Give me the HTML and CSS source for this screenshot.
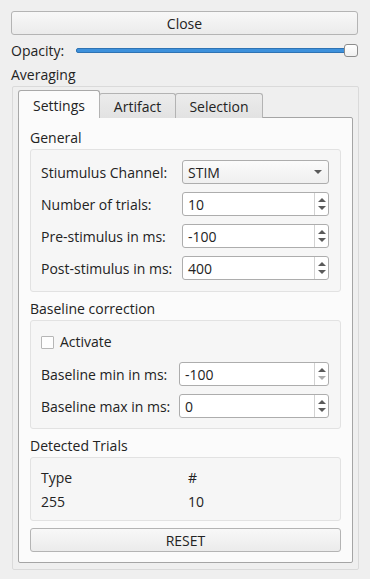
FILE: index.html
```html
<!DOCTYPE html>
<html lang="en">
<head>
  <meta charset="UTF-8">
  <meta name="viewport" content="width=device-width, initial-scale=1.0">
  <title>Averaging</title>
  <link rel="stylesheet" href="styles.css">
</head>
<body>
  <div class="window">
    <div class="push-btn close-btn">Close</div>

    <div class="opacity-row">
      <span class="opacity-label">Opacity:</span>
      <div class="slider">
        <div class="slider-groove"></div>
        <div class="slider-handle"></div>
      </div>
    </div>

    <div class="section-title">Averaging</div>
    <div class="averaging-box">
      <div class="tab-bar">
        <div class="tab tab-active tab-settings">Settings</div>
        <div class="tab tab-artifact">Artifact</div>
        <div class="tab tab-selection">Selection</div>
      </div>

      <div class="tab-pane">
        <!-- General -->
        <div class="group-title">General</div>
        <div class="group-box">
          <div class="form-grid general-grid">
            <span class="form-label">Stiumulus Channel:</span>
            <div class="combo">
              <span>STIM</span>
              <span class="combo-arrow"></span>
            </div>

            <span class="form-label">Number of trials:</span>
            <div class="spin">
              <span class="spin-value">10</span>
              <div class="spin-buttons"><span class="arrow-up"></span><span class="arrow-down"></span></div>
            </div>

            <span class="form-label">Pre-stimulus in ms:</span>
            <div class="spin">
              <span class="spin-value">-100</span>
              <div class="spin-buttons"><span class="arrow-up"></span><span class="arrow-down"></span></div>
            </div>

            <span class="form-label">Post-stimulus in ms:</span>
            <div class="spin">
              <span class="spin-value">400</span>
              <div class="spin-buttons"><span class="arrow-up"></span><span class="arrow-down"></span></div>
            </div>
          </div>
        </div>

        <!-- Baseline correction -->
        <div class="group-title">Baseline correction</div>
        <div class="group-box baseline-box">
          <label class="check-row">
            <span class="checkbox"></span>
            <span>Activate</span>
          </label>
          <div class="form-grid baseline-grid">
            <span class="form-label">Baseline min in ms:</span>
            <div class="spin">
              <span class="spin-value">-100</span>
              <div class="spin-buttons"><span class="arrow-up"></span><span class="arrow-down arrow-disabled"></span></div>
            </div>

            <span class="form-label">Baseline max in ms:</span>
            <div class="spin">
              <span class="spin-value">0</span>
              <div class="spin-buttons"><span class="arrow-up"></span><span class="arrow-down"></span></div>
            </div>
          </div>
        </div>

        <!-- Detected trials -->
        <div class="group-title">Detected Trials</div>
        <div class="group-box trials-box">
          <div class="trials-grid">
            <span>Type</span><span>#</span>
            <span>255</span><span>10</span>
          </div>
        </div>

        <div class="push-btn reset-btn">RESET</div>
      </div>
    </div>
  </div>
</body>
</html>
```

FILE: styles.css
```css
body {
  margin: 0;
  background-color: #efefef;
  font-family: "Open Sans", "DejaVu Sans", sans-serif;
  font-size: 14px;
  color: #232323;
}
.window {
  padding: 11px 12px 0 11px;
}

/* buttons */
.push-btn {
  box-sizing: border-box;
  height: 24px;
  padding-top: 1px;
  line-height: 21px;
  text-align: center;
  border: 1px solid #b4b4b4;
  border-radius: 3px;
  background: linear-gradient(#f8f8f8, #ebebeb);
}
.close-btn {
  width: 347px;
}

/* opacity slider */
.opacity-row {
  display: flex;
  align-items: center;
  height: 30px;
}
.opacity-label {
  width: 65px;
}
.slider {
  position: relative;
  flex: 1;
  height: 14px;
}
.slider-groove {
  position: absolute;
  left: 0;
  right: 6px;
  top: 5px;
  height: 5px;
  box-sizing: border-box;
  border: 1px solid #2f73b3;
  border-radius: 2px;
  background-color: #3d91dc;
}
.slider-handle {
  position: absolute;
  right: 0;
  top: 1px;
  width: 14px;
  height: 13px;
  box-sizing: border-box;
  border: 1px solid #8c8c8c;
  border-radius: 3px;
  background: linear-gradient(#ffffff, #f0f0f0);
}

.section-title {
  height: 20px;
  line-height: 20px;
  margin-bottom: 1px;
}

/* averaging group with tabs */
.averaging-box {
  box-sizing: border-box;
  width: 347px;
  margin-left: 1px;
  padding: 3px 5px 6px 5px;
  border: 1px solid #dadada;
  border-radius: 2px;
  background-color: #efefef;
}
.tab-bar {
  display: flex;
  align-items: flex-end;
  margin-bottom: -1px;
  position: relative;
  z-index: 1;
}
.tab {
  box-sizing: border-box;
  height: 25px;
  padding-top: 1px;
  line-height: 23px;
  text-align: center;
  border: 1px solid #b3b3b3;
  border-bottom: none;
  border-radius: 3px 3px 0 0;
  background: linear-gradient(#ececec, #e2e2e2);
}
.tab-active {
  height: 28px;
  padding-top: 2px;
  line-height: 26px;
  background: #fbfbfb;
  border-color: #a8a8a8;
}
.tab-settings { width: 82px; }
.tab-artifact { width: 77px; margin-left: -1px; }
.tab-selection { width: 88px; margin-left: -1px; }

.tab-pane {
  box-sizing: border-box;
  height: 446px;
  padding: 10px 11px 10px 11px;
  border: 1px solid #a5a5a5;
  border-radius: 0 2px 2px 2px;
  background-color: #fbfbfb;
}

/* group boxes */
.group-title {
  height: 20px;
  line-height: 20px;
  margin-bottom: 1px;
}
.group-box {
  box-sizing: border-box;
  padding: 10px 10px 11px 10px;
  border: 1px solid #e2e2e2;
  border-radius: 3px;
  background-color: #f6f6f6;
  margin-bottom: 7px;
}
.form-grid {
  display: grid;
  row-gap: 8px;
  align-items: center;
}
.general-grid {
  grid-template-columns: 141px 147px;
}
.baseline-grid {
  grid-template-columns: 138px 150px;
}
.baseline-box {
  padding-bottom: 10px;
}
.check-row {
  display: flex;
  align-items: center;
  gap: 6px;
  height: 21px;
  margin-bottom: 10px;
}
.checkbox {
  box-sizing: border-box;
  width: 13px;
  height: 13px;
  margin-top: 1px;
  border: 1px solid #b6b6b6;
  border-radius: 1px;
  background-color: #fdfdfd;
}

/* combo and spin boxes */
.combo, .spin {
  box-sizing: border-box;
  height: 24px;
  display: flex;
  align-items: center;
  border: 1px solid #adadad;
  border-radius: 3px;
}
.combo {
  justify-content: space-between;
  padding: 0 6px 0 5px;
  background: linear-gradient(#fbfbfb, #efefef);
}
.combo-arrow {
  width: 0;
  height: 0;
  border-left: 4px solid transparent;
  border-right: 4px solid transparent;
  border-top: 4px solid #5a5a5a;
}
.spin {
  background-color: #ffffff;
}
.spin-value {
  flex: 1;
  padding-left: 5px;
}
.spin-buttons {
  box-sizing: border-box;
  width: 14px;
  height: 100%;
  display: flex;
  flex-direction: column;
  justify-content: center;
  align-items: center;
  gap: 4px;
  border-left: 1px solid #d2d2d2;
}
.arrow-up, .arrow-down {
  width: 0;
  height: 0;
  border-left: 4px solid transparent;
  border-right: 4px solid transparent;
}
.arrow-up { border-bottom: 4px solid #5a5a5a; }
.arrow-down { border-top: 4px solid #5a5a5a; }
.arrow-disabled { border-top-color: #ababab; }

/* detected trials */
.trials-box {
  padding: 10px 10px 8px 10px;
}
.trials-grid {
  display: grid;
  grid-template-columns: 147px 1fr;
  row-gap: 4px;
  line-height: 20px;
}
```
